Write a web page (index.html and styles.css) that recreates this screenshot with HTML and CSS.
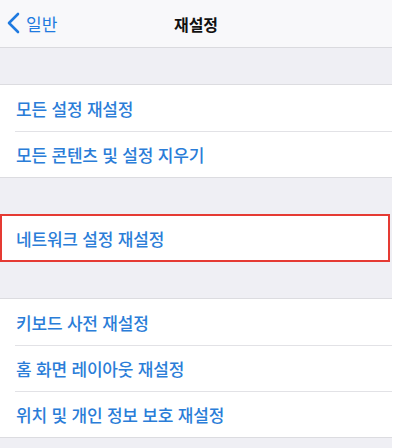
FILE: index.html
```html
<!DOCTYPE html>
<html lang="ko">

<head>
    <meta charset="UTF-8">
    <meta name="viewport" content="width=device-width, initial-scale=1.0">
    <title>재설정</title>
    <link rel="stylesheet" href="styles.css">
</head>

<body>
    <div class="screen">
        <header class="nav">
            <a class="back" href="#">
                <svg class="chevron" width="13" height="22" viewBox="0 0 13 22">
                    <path d="M11 2 L2 11 L11 20" fill="none" stroke="currentColor" stroke-width="2.6"
                        stroke-linecap="round" stroke-linejoin="round" />
                </svg>
                <span>일반</span>
            </a>
            <h1 class="title">재설정</h1>
        </header>

        <div class="gap"></div>
        <ul class="group">
            <li class="row">모든 설정 재설정</li>
            <li class="row">모든 콘텐츠 및 설정 지우기</li>
        </ul>

        <div class="gap"></div>
        <ul class="group highlight">
            <li class="row">네트워크 설정 재설정</li>
        </ul>

        <div class="gap"></div>
        <ul class="group">
            <li class="row">키보드 사전 재설정</li>
            <li class="row">홈 화면 레이아웃 재설정</li>
            <li class="row">위치 및 개인 정보 보호 재설정</li>
        </ul>
    </div>
</body>

</html>
```

FILE: styles.css
```css
body {
    margin: 0px;
    background: #fff;
    font-family: "Noto Sans CJK KR", "Noto Sans", sans-serif;
}

.screen {
    width: 392px;
    height: 448px;
    overflow: hidden;
    background: #efeff4;
}

.nav {
    position: relative;
    height: 47px;
    background: #f8f8fa;
    border-bottom: 1px solid #dadade;
    display: flex;
    align-items: center;
    justify-content: center;
}

.back {
    position: absolute;
    left: 7px;
    top: 0;
    height: 47px;
    display: flex;
    align-items: center;
    gap: 6px;
    color: #1f7ae0;
    text-decoration: none;
    font-size: 17px;
}

.chevron {
    margin-top: -1px;
}

.title {
    margin: 0;
    font-size: 16px;
    font-weight: 700;
    color: #111;
}

.gap {
    height: 36px;
}

.group {
    list-style: none;
    margin: 0;
    padding: 0;
    background: #fff;
    border-top: 1px solid #dcdce0;
    border-bottom: 1px solid #dcdce0;
}

.row {
    height: 46px;
    display: flex;
    align-items: center;
    padding-left: 16px;
    font-size: 17px;
    font-weight: 500;
    color: #2a7dd8;
    letter-spacing: -0.2px;
    position: relative;
}

.row + .row {
    height: 45px;
    border-top: 1px solid #e2e2e6;
}

.row + .row::before {
    content: "";
    position: absolute;
    left: 0;
    top: -1px;
    width: 15px;
    height: 1px;
    background: #fff;
}

.highlight {
    border: 2px solid #e53a33;
    width: 386px;
}

.highlight .row {
    height: 44px;
    padding-left: 14px;
}
```
